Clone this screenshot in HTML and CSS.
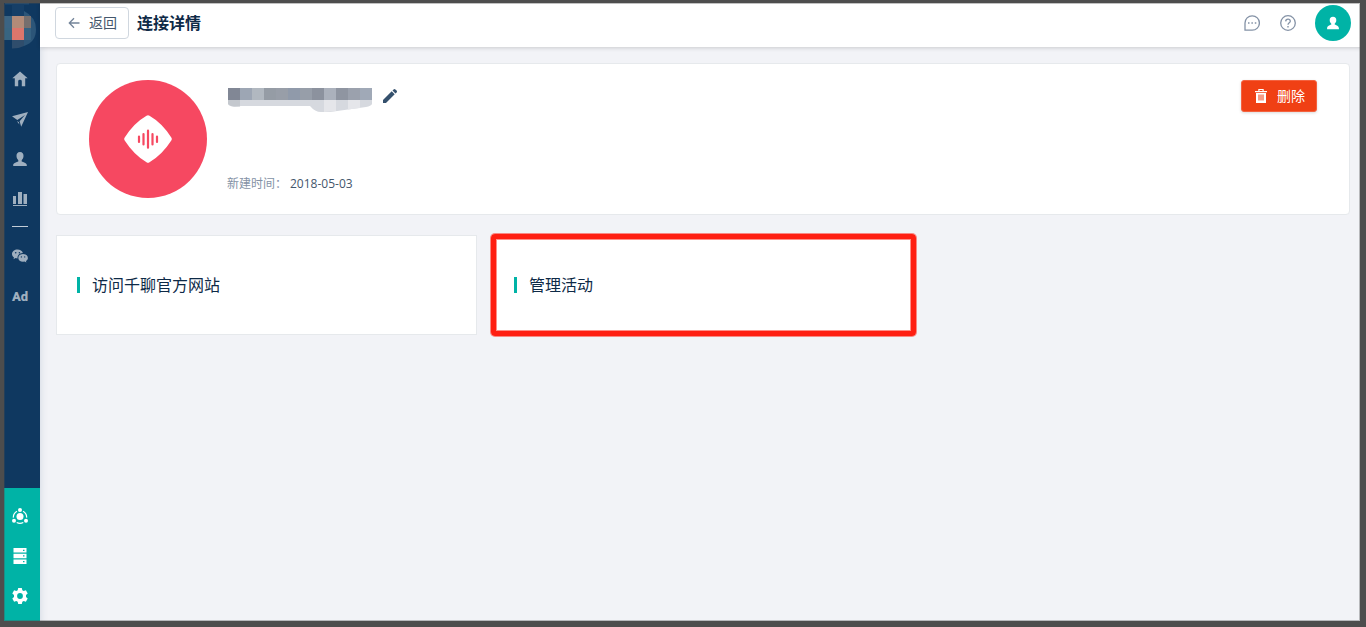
FILE: index.html
```html
<!DOCTYPE html>
<html lang="zh-CN">

<head>
    <meta charset="UTF-8">
    <meta name="viewport" content="width=device-width, initial-scale=1.0">
    <title>连接详情</title>
    <link rel="stylesheet" href="styles.css">
</head>

<body>
    <div class="app">
        <nav class="sidebar">
            <div class="logo">
                <svg width="40" height="59" viewBox="0 0 40 59">
                    <path fill="#1f4a72" d="M5 3h24v1.500H5z" />
                    <path fill="#163f67" d="M12 4h12v12H12z" />
                    <path fill="#2c5578" d="M24 11q12 6 12 18.500T24 46z" />
                    <path fill="#2f4d6c" d="M12 40h12v6q-5 2.500-12 2.500z" />
                    <g shape-rendering="crispEdges">
                        <path fill="#3b6483" d="M4 16h8v12H4z" />
                        <path fill="#386581" d="M4 28h8v12H4z" />
                        <path fill="#b38b78" d="M12 16h12v12H12z" />
                        <path fill="#db766c" d="M12 28h12v12H12z" />
                        <path fill="#766f6e" d="M24 16h7v12h-7z" />
                        <path fill="#356181" d="M24 28h7v12h-7z" />
                    </g>
                </svg>
            </div>
            <a class="item"><svg width="16" height="16" viewBox="0 0 16 16"><path d="M8 .5 15.7 7.3H13.2V15.3H9.8V10.2Q9.8 8.8 8 8.8T6.2 10.2V15.3H2.8V7.3H.3z" /></svg></a>
            <a class="item"><svg width="16" height="16" viewBox="0 0 16 16"><path d="M16 1 9.2 15.7 7.6 10.2 13 4 5.3 9.1 0 5.2zM4.9 10.2 6.8 10.9 7.4 13.4z" /></svg></a>
            <a class="item"><svg width="16" height="16" viewBox="0 0 16 16"><path d="M8 1c2.4 0 3.7 1.7 3.5 4.1 0 2-.9 3.2-1.8 4.1v1.200c1.700.9 5.100 1.300 5.100 3.600v1H1.200v-1c0-2.300 3.400-2.700 5.100-3.600V9.200C5.400 8.300 4.500 7.100 4.500 5.100 4.300 2.700 5.600 1 8 1z" /></svg></a>
            <a class="item"><svg width="16" height="16" viewBox="0 0 16 16"><path d="M1 5h3v8H1zM6 1h4v12H6zM11.500 3H15v10h-3.500zM1 14h14v1H1z" /></svg></a>
            <div class="divider"></div>
            <a class="item">
                <svg width="16" height="16" viewBox="0 0 16 16">
                    <path d="M5.500 1.500C2.500 1.500 0 3.500 0 6c0 1.500.8 2.700 2 3.500l-.5 1.700 2-1.100 2 .3C5.300 7.200 7.500 5 10.900 5 10.300 3 8.100 1.500 5.500 1.500z" />
                    <path d="M11 6C8.400 6 6.300 7.700 6.300 9.900s2.100 3.900 4.700 3.900l1.500-.2 1.900 1-.5-1.600C15.100 12.300 15.900 11.200 15.900 9.900 15.900 7.700 13.700 6 11 6z" />
                    <g class="eyes"><circle cx="3.700" cy="4.700" r=".8" /><circle cx="7.400" cy="4.700" r=".8" /><circle cx="9.400" cy="8.900" r=".7" /><circle cx="12.700" cy="8.900" r=".7" /></g>
                </svg>
            </a>
            <a class="item ad">Ad</a>
            <div class="bottom">
                <a class="item">
                    <svg width="16" height="16" viewBox="0 0 16 16">
                        <circle cx="8" cy="8.500" r="3.500" /><circle cx="8" cy="2" r="2" /><circle cx="2" cy="12.700" r="2" /><circle cx="14" cy="12.700" r="2" />
                        <path class="line" d="M5 3.200C2.600 4.500 1.200 6.800 1.400 9.600M11 3.200c2.400 1.300 3.800 3.600 3.600 6.400M4.700 14.500q3.300 1.600 6.600 0" />
                    </svg>
                </a>
                <a class="item">
                    <svg width="16" height="16" viewBox="0 0 16 16"><path fill-rule="evenodd" d="M1.500 0h13v4.500h-13zM1.500 5.700h13v4.500h-13zM1.500 11.400h13V16h-13zM11 1.700v1.300h1.500V1.700zM11 7.300v1.300h1.500V7.300zM11 13v1.300h1.500V13z" /></svg>
                </a>
                <a class="item">
                    <svg width="16" height="16" viewBox="0 0 16 16"><path fill-rule="evenodd" d="M6.200 0h3.600l.5 2.200 1.400.8 2.200-.7 1.800 3.100L14 7v2l1.700 1.600-1.800 3.100-2.200-.7-1.400.8-.5 2.200H6.200l-.5-2.200-1.400-.8-2.200.7L.3 10.600 2 9V7L.3 5.400l1.800-3.100 2.200.7 1.400-.8zM8 5.100a2.900 2.900 0 1 0 0 5.800 2.900 2.900 0 0 0 0-5.800z" /></svg>
                </a>
            </div>
        </nav>

        <div class="main">
            <header class="topbar">
                <a class="back">
                    <svg width="12" height="12" viewBox="0 0 12 12"><path d="M11.500 6H1.500M6 1.300 1.300 6 6 10.700" /></svg>
                    <span>返回</span>
                </a>
                <h1>连接详情</h1>
                <div class="tools">
                    <svg width="16" height="16" viewBox="0 0 16 16"><path d="M1 15.200V8A7.200 7.200 0 1 1 8.200 15.200z" /><path class="dots" d="M4 7.300h1.500v1.500H4zM7.400 7.300h1.500v1.500H7.400zM10.800 7.300h1.500v1.500h-1.500z" /></svg>
                    <svg width="16" height="16" viewBox="0 0 16 16"><circle cx="8" cy="8" r="7.300" /><path d="M5.700 6.400Q5.800 4.200 8 4.200T10.300 6.200C10.300 7.700 8 7.900 8 9.700" /><path class="dots" d="M7.300 11h1.400v1.400H7.300z" /></svg>
                    <div class="avatar">
                        <svg width="14" height="14" viewBox="0 0 14 14"><path d="M7 .8c2.200 0 3.400 1.500 3.300 3.500 0 1.700-.8 2.700-1.600 3.400v.8c1.600.9 4.200 1.300 4.200 3.700v1.100H1.100v-1.100c0-2.400 2.600-2.800 4.200-3.700v-.8C4.500 7 3.700 6 3.700 4.300 3.600 2.300 4.800.8 7 .8z" /></svg>
                    </div>
                </div>
            </header>

            <div class="content">
                <section class="card profile">
                    <div class="brand">
                        <svg width="48" height="48" viewBox="0 0 48 48">
                            <path fill="#fff" d="M22.500.8Q24-.5 25.500.8 38 8 47.300 22.500 48.300 24 47.300 25.500 38 40 25.500 47.200 24 48.500 22.500 47.200 10 40 .7 25.500-.3 24 .7 22.500 10 8 22.500.8z" />
                            <path class="wave" d="M15 21.500v5.500M19.500 19v10.500M24 15.700v17M28.500 19v10.500M33 21.500v5.500" />
                        </svg>
                    </div>
                    <div class="info">
                        <div class="name">
                            <!-- masked account name -->
                            <svg width="145" height="24" viewBox="0 0 145 24">
                                <g shape-rendering="crispEdges">
                                    <path fill="#818795" d="M0 0h12v12H0z" />
                                    <path fill="#9da6b4" d="M12 0h12v12H12z" />
                                    <path fill="#b1b8c0" d="M24 0h12v12H24z" />
                                    <path fill="#959ca5" d="M36 0h12v12H36z" />
                                    <path fill="#989ea8" d="M48 0h12v12H48z" />
                                    <path fill="#909aaa" d="M60 0h12v12H60z" />
                                    <path fill="#979ea9" d="M72 0h12v12H72z" />
                                    <path fill="#8c929e" d="M84 0h12v12H84z" />
                                    <path fill="#abb1bc" d="M96 0h12v12H96z" />
                                    <path fill="#8f95a1" d="M108 0h12v12h-12z" />
                                    <path fill="#9ba1ad" d="M120 0h12v12h-12z" />
                                    <path fill="#a0a9b7" d="M132 0h12v12h-12z" />
                                </g>
                                <path fill="#d6d9df" d="M0 12h144v4q-1 2-6 3l-36 5h-9q-6 0-11-6H13q-11 2-13-2z" />
                                <path fill="#c4c8ce" d="M0 12h12v6.500Q2 19 0 16z" />
                                <path fill="#e5e6ea" d="M96 12h12v11l-12 1zM120 12h12v8l-12 1.600z" />
                            </svg>
                            <svg class="edit" width="14" height="14" viewBox="0 0 14 14"><path d="M0 11 8.700 2.300l3 3L3 14H0zM9.500 1.500 10.600.4q.9-.8 1.800 0l1.200 1.200q.8.900 0 1.800l-1.100 1.100z" /></svg>
                        </div>
                        <div class="created"><span>新建时间：</span>2018-05-03</div>
                    </div>
                    <a class="delete">
                        <svg width="12" height="14" viewBox="0 0 12 14">
                            <path d="M0 2h3.300V0h5.400v2H12v1.300H0zM4.500 1v1h3V1zM1 4h10v10H1z" fill="#fff" fill-rule="evenodd" />
                            <path d="M3 5.500h6v6H3z" fill="#f69d87" />
                        </svg>
                        <span>删除</span>
                    </a>
                </section>

                <section class="links">
                    <a class="link"><span>访问千聊官方网站</span></a>
                    <a class="link marked"><span>管理活动</span></a>
                </section>
            </div>
        </div>
    </div>
    <div class="frame"></div>
</body>

</html>
```

FILE: styles.css
```css
* {
    box-sizing: border-box;
}

body {
    margin: 0;
    font-family: "Open Sans", "Noto Sans CJK SC", sans-serif;
    font-size: 14px;
    color: #0e2a47;
}

svg {
    display: block;
    flex: none;
}

.app {
    display: flex;
    height: 627px;
    overflow: hidden;
    background-color: #f2f3f7;
}

.frame {
    position: fixed;
    top: 0;
    right: 0;
    bottom: 0;
    left: 0;
    border: solid #4d4d4d;
    border-width: 3px 6px 6px 4px;
    box-shadow: inset 0 0 0 1px rgba(77, 77, 77, 0.35);
    pointer-events: none;
}

.sidebar {
    display: flex;
    flex-direction: column;
    flex: none;
    width: 40px;
    background-color: #0f3860;
    box-shadow: 0 0 8px rgba(15, 56, 96, 0.15);
}

.logo {
    height: 59px;
}

.item {
    display: flex;
    align-items: center;
    justify-content: center;
    height: 40px;
    fill: #9fafbf;
}

.eyes {
    fill: #0f3860;
}

.ad {
    font: 900 13px Roboto, sans-serif;
    color: #9fafbf;
}

.divider {
    height: 1px;
    margin: 7px 12px 9px;
    background-color: #c3cdd7;
}

.bottom {
    margin-top: auto;
    height: 139px;
    padding-top: 8px;
    background-color: #00b3a6;
}

.bottom .item {
    fill: #fff;
}

.bottom .line {
    fill: none;
    stroke: #fff;
    stroke-width: 1.2;
}

.main {
    flex: 1;
}

.topbar {
    display: flex;
    align-items: center;
    height: 47px;
    padding: 0 15px 1px;
    background-color: #fff;
    box-shadow: 0 1px 4px rgba(0, 0, 0, 0.17);
}

.back {
    display: flex;
    align-items: center;
    gap: 9px;
    width: 74px;
    height: 32px;
    padding-left: 12px;
    border: 1px solid #d0d7df;
    border-radius: 4px;
    color: #44566c;
}

.back svg {
    fill: none;
    stroke: #738499;
    stroke-width: 1.3;
}

.back span,
.delete span,
.link span {
    padding-bottom: 2px;
}

h1 {
    margin: 0 0 0 8px;
    font-size: 16px;
    line-height: 24px;
}

.tools {
    display: flex;
    align-items: center;
    gap: 20px;
    margin-left: auto;
    fill: none;
    stroke: #8492a6;
    stroke-width: 1.3;
}

.dots {
    fill: #8492a6;
    stroke: none;
}

.avatar {
    display: flex;
    align-items: center;
    justify-content: center;
    width: 36px;
    height: 36px;
    margin-left: -1px;
    border-radius: 50%;
    background-color: #00b3a6;
    fill: #fff;
    stroke: none;
}

.content {
    padding: 16px;
}

.profile {
    display: flex;
    align-items: flex-start;
    height: 152px;
    padding: 16px 32px;
    border: 1px solid #e6e9ec;
    border-radius: 4px;
    background-color: #fff;
}

.brand {
    display: flex;
    align-items: center;
    justify-content: center;
    width: 118px;
    height: 118px;
    border-radius: 50%;
    background-color: #f64861;
}

.wave {
    stroke: #f64861;
    stroke-width: 2.2;
    stroke-linecap: round;
}

.info {
    display: flex;
    flex-direction: column;
    justify-content: space-between;
    height: 118px;
    padding: 8px 0 4px 20px;
}

.name {
    display: flex;
    gap: 10px;
    margin-left: 1px;
}

.edit {
    margin-top: 1px;
    fill: #35516d;
}

.created {
    font-size: 12px;
    line-height: 20px;
    color: #44566c;
}

.created span {
    display: inline-block;
    width: 63px;
    color: #8492a6;
}

.delete {
    display: flex;
    align-items: center;
    gap: 10px;
    width: 76px;
    height: 32px;
    margin-left: auto;
    padding-left: 13px;
    border: 1px solid #f4623f;
    border-radius: 3px;
    background-color: #f04014;
    box-shadow: 0 1px 3px rgba(0, 0, 0, 0.15);
    color: #fff;
}

.links {
    display: flex;
    gap: 16px;
    margin-top: 20px;
}

.link {
    position: relative;
    display: flex;
    align-items: center;
    width: 421px;
    height: 100px;
    padding-left: 20px;
    border: 1px solid #e6e9ec;
    background-color: #fff;
    font-size: 16px;
}

.link::before {
    content: "";
    width: 3px;
    height: 16px;
    margin-right: 12px;
    background-color: #00b3a6;
}

/* highlight box around the card */
.marked::after {
    content: "";
    position: absolute;
    inset: -2px -3px;
    border: 5px solid #ff1f12;
    border-radius: 4px;
    box-shadow: 0 0 0 1px rgba(255, 31, 18, 0.5), inset 0 0 0 1px rgba(255, 31, 18, 0.5);
}
```
